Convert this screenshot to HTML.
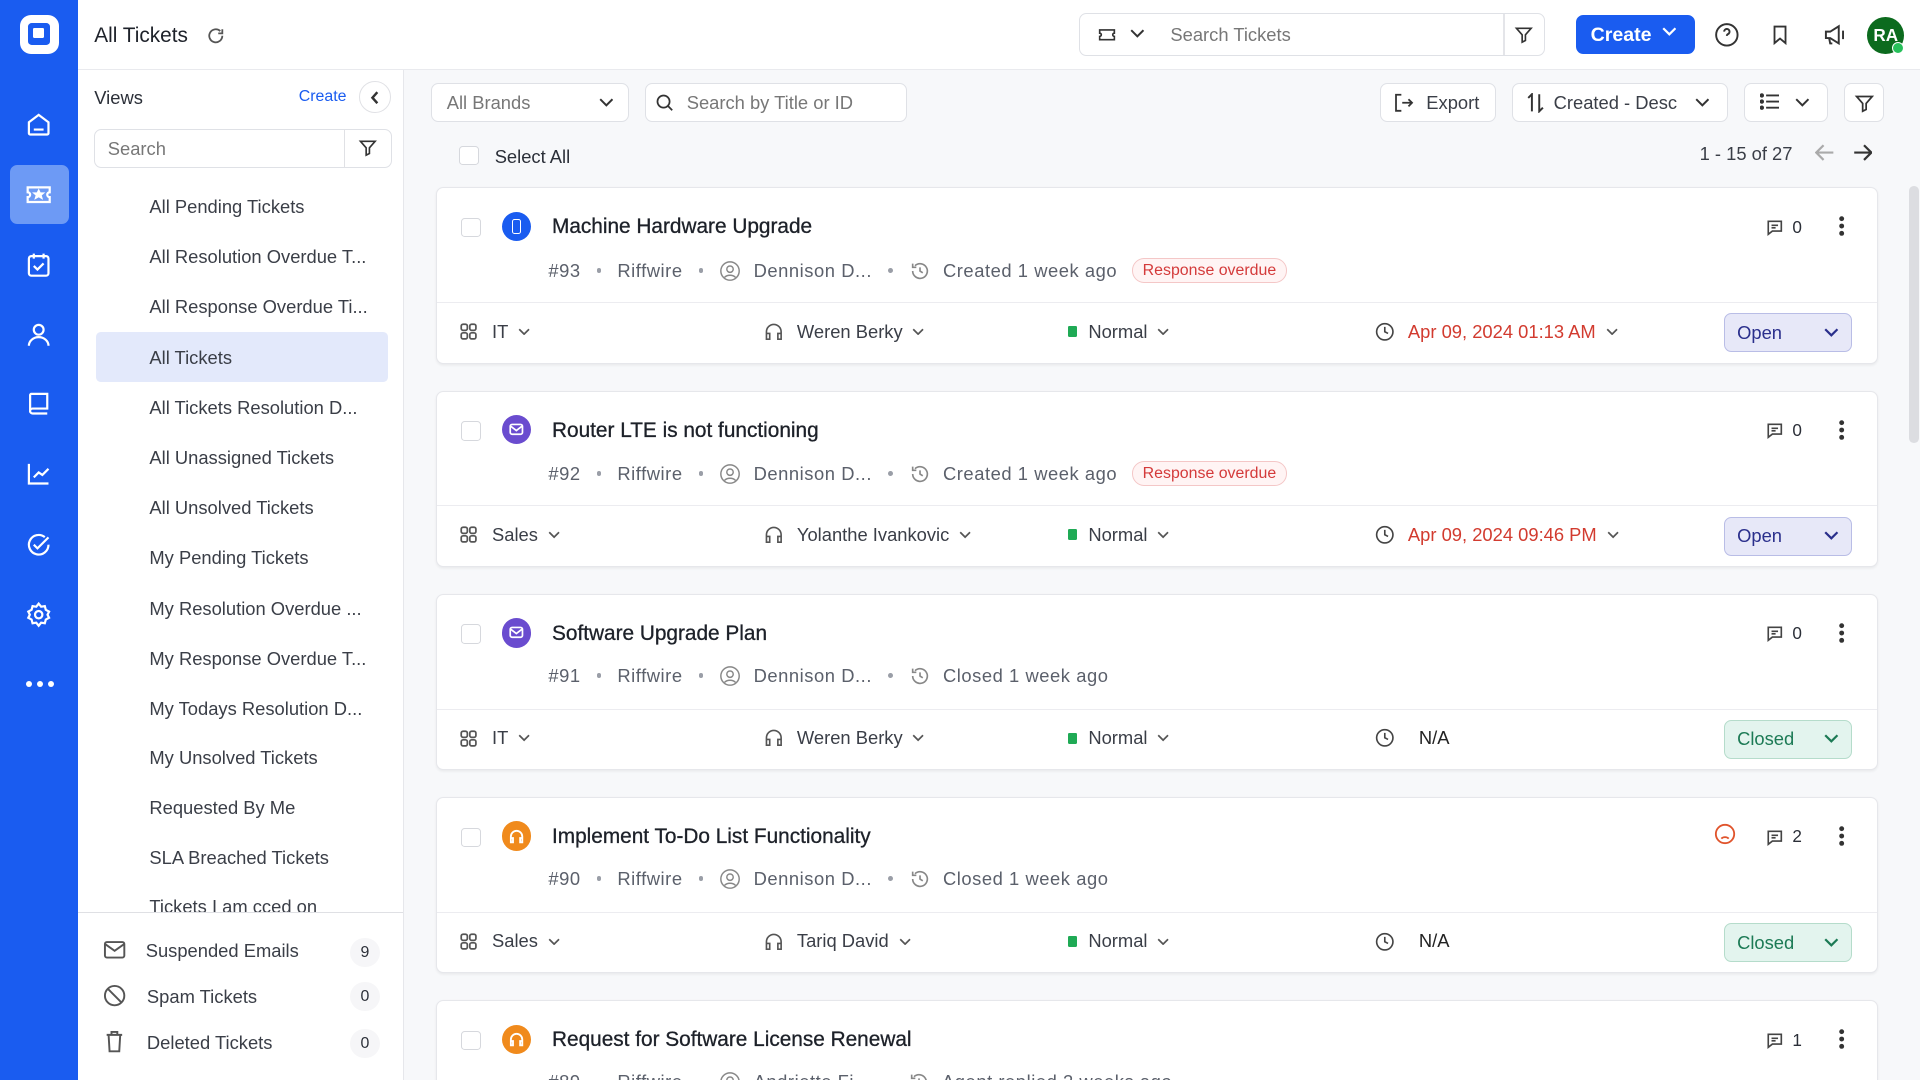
<!DOCTYPE html>
<html><head><meta charset="utf-8">
<style>
*{box-sizing:border-box;margin:0;padding:0}
html,body{width:1920px;height:1080px;overflow:hidden;background:#f7f8fa}
#root{zoom:1.22449;width:1568px;height:882px;position:relative;font-family:"Liberation Sans",sans-serif;color:#2b2f38;overflow:hidden;background:#f7f8fa}
.a{position:absolute}
.sb{left:0;top:0;width:64px;height:882px;background:#1a5cf0}
.ni{position:absolute;left:20px;width:24px;height:24px}
svg{display:block}
.top{left:64px;top:0;width:1504px;height:57px;background:#fff;border-bottom:1px solid #e9eaee}
.views{left:64px;top:57px;width:266px;height:825px;background:#fff;border-right:1px solid #e6e7eb}
.vi{position:absolute;left:58px;font-size:15px;color:#3a3e47;white-space:nowrap}
.btn{position:absolute;background:#fff;border:1px solid #dfe1e6;border-radius:6px;font-size:15px;color:#3a3e47;display:flex;align-items:center}
.card{position:absolute;left:356px;width:1178px;height:144px;background:#fff;border:1px solid #e6e7eb;border-radius:6px;box-shadow:0 1px 2px rgba(0,0,0,.06)}
.card .cb{position:absolute;left:20px;top:24px;width:16px;height:16px;border:1px solid #d6d8dd;border-radius:3px}
.card .ic{position:absolute;left:53px;top:19px;width:24px;height:24px;border-radius:50%}
.card .t{position:absolute;left:94px;top:22px;font-size:17px;font-weight:500;color:#1d2129;-webkit-text-stroke:.25px #1d2129}
.card .m{position:absolute;left:91px;top:57px;font-size:15px;color:#5b606b;white-space:nowrap;display:flex;align-items:center;letter-spacing:.45px}
.card .m svg{margin-right:10px!important}
.card .dv{position:absolute;left:0;right:0;top:93px;border-top:1px solid #ececf0}
.card .b{position:absolute;top:108px;font-size:15px;color:#3a3e47;display:flex;align-items:center;white-space:nowrap}
.dot{display:inline-block;width:4px;height:4px;border-radius:50%;background:#9a9ea7;margin:0 13px}
.ro{border:1px solid #f4c7c7;background:#fff4f4;color:#d43b3b;font-size:13px;border-radius:10px;padding:2px 8px;margin-left:12px;letter-spacing:0}
.st{position:absolute;left:1051px;top:102px;width:105px;height:32px;border-radius:6px;font-size:15px;display:flex;align-items:center;padding:0 10px;justify-content:space-between}
.open{background:#e7e8f8;border:1px solid #b9bde6;color:#2a2f8c}
.closed{background:#e3f4ee;border:1px solid #b5dccb;color:#1c7a55}
.chev{width:10px;height:6px}
</style></head><body><div id="root">

<div class="a sb">
 <div class="a" style="left:16px;top:12px;width:32px;height:32px;background:#fff;border-radius:9px"><div class="a" style="left:7px;top:7px;width:18px;height:18px;background:#1a5cf0;border-radius:3px"></div><div class="a" style="left:11px;top:11px;width:9px;height:8px;background:#fff;border-radius:1px"></div></div>
 <div class="a" style="left:8px;top:135px;width:48px;height:48px;background:#6d9af5;border-radius:6px"></div>
 <svg class="ni" style="top:90px" viewBox="0 0 24 24" fill="none" stroke="#fff" stroke-width="1.8"><path d="M4 10l8-6 8 6v9a1 1 0 0 1-1 1H5a1 1 0 0 1-1-1z M8 16h8"/></svg>
 <svg class="ni" style="top:147px" viewBox="0 0 24 24" fill="none" stroke="#fff" stroke-width="1.8"><path d="M3 6h18v4a2 2 0 0 0 0 4v4H3v-4a2 2 0 0 0 0-4z"/><path d="M12 9l1 2h2l-1.5 1.3.6 2-2.1-1.2-2.1 1.2.6-2L9 11h2z" fill="#fff"/></svg>
 <svg class="ni" style="top:204px" viewBox="0 0 24 24" fill="none" stroke="#fff" stroke-width="1.8"><rect x="4" y="5" width="16" height="16" rx="2"/><path d="M8 3v4M16 3v4M8 13l3 3 5-5"/></svg>
 <svg class="ni" style="top:261px" viewBox="0 0 24 24" fill="none" stroke="#fff" stroke-width="1.8"><circle cx="12" cy="8" r="4"/><path d="M4 21a8 7 0 0 1 16 0"/></svg>
 <svg class="ni" style="top:318px" viewBox="0 0 24 24" fill="none" stroke="#fff" stroke-width="1.8"><path d="M5 19V5a1 1 0 0 1 1-1h13v12H7a2 2 0 0 0 0 4h12"/></svg>
 <svg class="ni" style="top:375px" viewBox="0 0 24 24" fill="none" stroke="#fff" stroke-width="1.8"><path d="M4 4v16h16M8 15l4-4 3 2 5-5"/></svg>
 <svg class="ni" style="top:433px" viewBox="0 0 24 24" fill="none" stroke="#fff" stroke-width="1.8"><path d="M20 12a8 8 0 1 1-3-6.2M8 12l3 3 9-9"/></svg>
 <svg class="ni" style="top:490px" viewBox="0 0 24 24" fill="none" stroke="#fff" stroke-width="1.8"><circle cx="12" cy="12" r="3"/><path d="M12 3l2 2.5 3-.5.8 3 2.7 1.5-1.3 2.5 1.3 2.5-2.7 1.5-.8 3-3-.5L12 21l-2-2.5-3 .5-.8-3L3.5 14.5 4.8 12 3.5 9.5 6.2 8 7 5l3 .5z"/></svg>
 <div class="a" style="left:21px;top:556px;width:24px;height:6px;display:flex;gap:4px"><i style="width:5px;height:5px;border-radius:50%;background:#fff"></i><i style="width:5px;height:5px;border-radius:50%;background:#fff"></i><i style="width:5px;height:5px;border-radius:50%;background:#fff"></i></div>
</div>

<div class="a top">
 <div class="a" style="left:13px;top:20px;font-size:17px;color:#1d2129">All Tickets</div>
 <svg class="a" style="left:104px;top:21px" width="16" height="16" viewBox="0 0 24 24" fill="none" stroke="#555" stroke-width="2.2"><path d="M20 12a8 8 0 1 1-2.5-5.8M20 4v5h-5"/></svg>
 <div class="a" style="left:817px;top:11px;width:381px;height:35px;border:1px solid #dfe1e6;border-radius:6px;background:#fff">
  <svg class="a" style="left:13px;top:9px" width="18" height="16" viewBox="0 0 24 24" fill="none" stroke="#333" stroke-width="2"><path d="M3 6h18v4a2 2 0 0 0 0 4v4H3v-4a2 2 0 0 0 0-4z"/></svg>
  <svg class="a" style="left:41px;top:12px" width="12" height="8" viewBox="0 0 12 8" fill="none" stroke="#333" stroke-width="1.6"><path d="M1 1l5 5 5-5"/></svg>
  <div class="a" style="left:74px;top:8px;font-size:15px;color:#777">Search Tickets</div>
  <div class="a" style="left:346px;top:0;width:1px;height:33px;background:#e4e5e9"></div>
  <svg class="a" style="left:355px;top:9px" width="16" height="16" viewBox="0 0 24 24" fill="none" stroke="#333" stroke-width="2"><path d="M3 4h18l-7 8v7l-4 2v-9z"/></svg>
 </div>
 <div class="a" style="left:1223px;top:12px;width:97px;height:32px;background:#1a5cf0;border-radius:6px;color:#fff;font-size:16px;font-weight:bold;padding:8px 0 0 12px">Create</div>
 <svg class="a" style="left:1293px;top:22px" width="12" height="8" viewBox="0 0 12 8" fill="none" stroke="#fff" stroke-width="1.8"><path d="M1 1l5 5 5-5"/></svg>
 <svg class="a" style="left:1336px;top:18px" width="21" height="21" viewBox="0 0 24 24" fill="none" stroke="#333" stroke-width="1.8"><circle cx="12" cy="12" r="10"/><path d="M9.5 9a2.5 2.5 0 1 1 3.5 2.3c-.7.4-1 1-1 1.7M12 17h.01"/></svg>
 <svg class="a" style="left:1381px;top:18px" width="18" height="21" viewBox="0 0 24 24" fill="none" stroke="#333" stroke-width="2"><path d="M6 3h12v18l-6-5-6 5z"/></svg>
 <svg class="a" style="left:1423px;top:18px" width="22" height="21" viewBox="0 0 24 24" fill="none" stroke="#333" stroke-width="1.8"><path d="M4 9h4l8-5v16l-8-5H4z M7 15l1 5h2 M20 8v8"/></svg>
 <div class="a" style="left:1461px;top:14px;width:30px;height:30px;border-radius:50%;background:#0c6b1e;color:#fff;font-size:14px;font-weight:bold;text-align:center;line-height:30px">RA</div>
 <div class="a" style="left:1481px;top:34px;width:10px;height:10px;border-radius:50%;background:#27c05a;border:1px solid #fff"></div>
</div>

<div class="a views">
 <div class="a" style="left:13px;top:14px;font-size:15px;color:#2b2f38">Views</div>
 <div class="a" style="left:180px;top:15px;font-size:13px;color:#1a5cf0;font-weight:500">Create</div>
 <div class="a" style="left:229px;top:9px;width:26px;height:26px;border:1px solid #e0e1e5;border-radius:50%;background:#fff"></div>
 <svg class="a" style="left:238px;top:17px" width="8" height="11" viewBox="0 0 8 11" fill="none" stroke="#333" stroke-width="2"><path d="M6 1L2 5.5 6 10"/></svg>
 <div class="a" style="left:13px;top:48px;width:243px;height:32px;border:1px solid #dfe1e6;border-radius:6px;background:#fff"></div>
 <div class="a" style="left:24px;top:56px;font-size:15px;color:#777">Search</div>
 <div class="a" style="left:217px;top:48px;width:1px;height:32px;background:#e0e1e5"></div>
 <svg class="a" style="left:228px;top:56px" width="16" height="16" viewBox="0 0 24 24" fill="none" stroke="#333" stroke-width="2"><path d="M3 4h18l-7 8v7l-4 2v-9z"/></svg>
 <div class="a" style="left:14px;top:214px;width:239px;height:41px;background:#e3e9fb;border-radius:4px"></div>
 <div class="vi" style="top:103px">All Pending Tickets</div>
 <div class="vi" style="top:144px">All Resolution Overdue T...</div>
 <div class="vi" style="top:185px">All Response Overdue Ti...</div>
 <div class="vi" style="top:226px">All Tickets</div>
 <div class="vi" style="top:267px">All Tickets Resolution D...</div>
 <div class="vi" style="top:308px">All Unassigned Tickets</div>
 <div class="vi" style="top:349px">All Unsolved Tickets</div>
 <div class="vi" style="top:390px">My Pending Tickets</div>
 <div class="vi" style="top:431px">My Resolution Overdue ...</div>
 <div class="vi" style="top:472px">My Response Overdue T...</div>
 <div class="vi" style="top:513px">My Todays Resolution D...</div>
 <div class="vi" style="top:553px">My Unsolved Tickets</div>
 <div class="vi" style="top:594px">Requested By Me</div>
 <div class="vi" style="top:635px">SLA Breached Tickets</div>
 <div class="vi" style="top:675px">Tickets I am cced on</div>
 <div class="a" style="left:0;top:688px;width:265px;height:137px;background:#fff;border-top:1px solid #dfe0e4"></div>
 <svg class="a" style="left:20px;top:711px" width="19" height="16" viewBox="0 0 24 20" fill="none" stroke="#555" stroke-width="2"><rect x="2" y="2" width="20" height="16" rx="2"/><path d="M2 4l10 7 10-7"/></svg>
 <div class="vi" style="left:55px;top:711px">Suspended Emails</div>
 <div class="a" style="left:222px;top:709px;width:24px;height:24px;border-radius:50%;background:#f6f6f8;font-size:13px;text-align:center;line-height:24px">9</div>
 <svg class="a" style="left:20px;top:747px" width="19" height="19" viewBox="0 0 24 24" fill="none" stroke="#555" stroke-width="2"><circle cx="12" cy="12" r="10"/><path d="M5 5l14 14"/></svg>
 <div class="vi" style="left:56px;top:748px">Spam Tickets</div>
 <div class="a" style="left:222px;top:745px;width:24px;height:24px;border-radius:50%;background:#f6f6f8;font-size:13px;text-align:center;line-height:24px">0</div>
 <svg class="a" style="left:21px;top:784px" width="17" height="19" viewBox="0 0 20 24" fill="none" stroke="#555" stroke-width="2"><path d="M2 5h16M7 5V2h6v3M4 5l1 17h10l1-17"/></svg>
 <div class="vi" style="left:56px;top:786px">Deleted Tickets</div>
 <div class="a" style="left:222px;top:783px;width:24px;height:24px;border-radius:50%;background:#f6f6f8;font-size:13px;text-align:center;line-height:24px">0</div>
</div>

<div class="btn" style="left:352px;top:68px;width:162px;height:32px;padding-left:12px;color:#777">All Brands</div>
<svg class="a" style="left:489px;top:80px" width="12" height="8" viewBox="0 0 12 8" fill="none" stroke="#333" stroke-width="1.6"><path d="M1 1l5 5 5-5"/></svg>
<div class="btn" style="left:527px;top:68px;width:214px;height:32px;padding-left:33px;color:#777">Search by Title or ID</div>
<svg class="a" style="left:534px;top:75px" width="17" height="17" viewBox="0 0 24 24" fill="none" stroke="#333" stroke-width="2"><circle cx="11" cy="11" r="7"/><path d="M16 16l5 5"/></svg>
<div class="btn" style="left:1127px;top:68px;width:95px;height:32px;padding-left:37px">Export</div>
<svg class="a" style="left:1138px;top:76px" width="18" height="16" viewBox="0 0 24 22" fill="none" stroke="#333" stroke-width="2"><path d="M9 2H3v18h6M10 11h11M17 7l4 4-4 4"/></svg>
<div class="btn" style="left:1235px;top:68px;width:176px;height:32px;padding-left:33px">Created - Desc</div>
<svg class="a" style="left:1247px;top:76px" width="14" height="16" viewBox="0 0 14 16" fill="none" stroke="#333" stroke-width="1.6"><path d="M4 15V1L1 4M10 1v14l3-3"/></svg>
<svg class="a" style="left:1384px;top:80px" width="12" height="8" viewBox="0 0 12 8" fill="none" stroke="#333" stroke-width="1.6"><path d="M1 1l5 5 5-5"/></svg>
<div class="btn" style="left:1424px;top:68px;width:69px;height:32px"></div>
<svg class="a" style="left:1437px;top:76px" width="16" height="14" viewBox="0 0 16 14" fill="#333" stroke="#333" stroke-width="1.6"><circle cx="1.5" cy="2" r="1"/><circle cx="1.5" cy="7" r="1"/><circle cx="1.5" cy="12" r="1"/><path d="M5 2h11M5 7h11M5 12h11"/></svg>
<svg class="a" style="left:1466px;top:80px" width="12" height="8" viewBox="0 0 12 8" fill="none" stroke="#333" stroke-width="1.6"><path d="M1 1l5 5 5-5"/></svg>
<div class="btn" style="left:1506px;top:68px;width:33px;height:32px"></div>
<svg class="a" style="left:1514px;top:76px" width="17" height="17" viewBox="0 0 24 24" fill="none" stroke="#333" stroke-width="2"><path d="M3 4h18l-7 8v7l-4 2v-9z"/></svg>

<div class="a" style="left:375px;top:119px;width:16px;height:16px;border:1px solid #d6d8dd;border-radius:3px;background:#fff"></div>
<div class="a" style="left:404px;top:119px;font-size:15px;color:#2b2f38">Select All</div>
<div class="a" style="left:1388px;top:117px;font-size:15px;color:#3a3e47">1 - 15 of 27</div>
<svg class="a" style="left:1482px;top:118px" width="16" height="14" viewBox="0 0 16 14" fill="none" stroke="#aaa" stroke-width="1.8"><path d="M15 7H2M7 1L1 7l6 6"/></svg>
<svg class="a" style="left:1513px;top:118px" width="16" height="14" viewBox="0 0 16 14" fill="none" stroke="#333" stroke-width="1.8"><path d="M1 7h13M9 1l6 6-6 6"/></svg>
<div class="a" style="left:1559px;top:152px;width:8px;height:210px;border-radius:4px;background:#dcdde1"></div>

<div class="card" style="top:153px">
 <div class="cb"></div>
 <div class="ic" style="background:#1a5cf0"><div class="a" style="left:8px;top:6px;width:8px;height:12px;border:1.6px solid #fff;border-radius:2px"></div></div>
 <div class="t">Machine Hardware Upgrade</div>
 <div class="m">#93<span class="dot"></span>Riffwire<span class="dot"></span><svg width="18" height="18" viewBox="0 0 24 24" fill="none" stroke="#888" stroke-width="1.6"><circle cx="12" cy="12" r="10"/><circle cx="12" cy="10" r="3.5"/><path d="M6 19a7 5 0 0 1 12 0"/></svg>Dennison D...<span class="dot"></span><svg width="18" height="18" viewBox="0 0 24 24" fill="none" stroke="#888" stroke-width="1.8"><path d="M4 12a8 8 0 1 0 2.5-5.8M4 4v4h4M12 8v4l3 2"/></svg>Created 1 week ago<span class="ro">Response overdue</span></div>
 <svg class="a" style="left:1085px;top:24px" width="16" height="16" viewBox="0 0 24 24" fill="none" stroke="#444" stroke-width="2"><path d="M4 4h16v12H9l-5 4z M8 9h8M8 12h5"/></svg>
 <div class="a" style="left:1107px;top:23px;font-size:14px">0</div>
 <svg class="a" style="left:1144px;top:22px" width="6" height="18" viewBox="0 0 6 18" fill="#333"><circle cx="3" cy="3" r="2"/><circle cx="3" cy="9" r="2"/><circle cx="3" cy="15" r="2"/></svg>
 <div class="dv"></div>
 <div class="b" style="left:19px"><svg width="14" height="14" viewBox="0 0 14 14" fill="none" stroke="#555" stroke-width="1.4"><rect x="1" y="1" width="5" height="5" rx="1.5"/><rect x="8" y="1" width="5" height="5" rx="1.5"/><rect x="1" y="8" width="5" height="5" rx="1.5"/><rect x="8" y="8" width="5" height="5" rx="1.5"/></svg><span style="margin:0 8px 0 12px">IT</span><svg class="chev" viewBox="0 0 10 6" fill="none" stroke="#555" stroke-width="1.4"><path d="M1 1l4 4 4-4"/></svg></div>
 <div class="b" style="left:267px"><svg width="16" height="16" viewBox="0 0 24 24" fill="none" stroke="#555" stroke-width="2"><path d="M3 18v-6a9 9 0 0 1 18 0v6M3 14h4v7H3zM17 14h4v7h-4z"/></svg><span style="margin:0 8px 0 11px">Weren Berky</span><svg class="chev" viewBox="0 0 10 6" fill="none" stroke="#555" stroke-width="1.4"><path d="M1 1l4 4 4-4"/></svg></div>
 <div class="b" style="left:515px"><i style="width:8px;height:9px;background:#1faa55;border-radius:1px"></i><span style="margin:0 8px 0 9px">Normal</span><svg class="chev" viewBox="0 0 10 6" fill="none" stroke="#555" stroke-width="1.4"><path d="M1 1l4 4 4-4"/></svg></div>
 <div class="b" style="left:766px"><svg width="16" height="16" viewBox="0 0 24 24" fill="none" stroke="#444" stroke-width="2"><circle cx="12" cy="12" r="10"/><path d="M12 6v6l4 2"/></svg><span style="margin:0 8px 0 11px;color:#d23b2f">Apr 09, 2024 01:13 AM</span><svg class="chev" viewBox="0 0 10 6" fill="none" stroke="#555" stroke-width="1.4"><path d="M1 1l4 4 4-4"/></svg></div>
 <div class="st open">Open<svg width="12" height="8" viewBox="0 0 12 8" fill="none" stroke="#2a2f8c" stroke-width="1.8"><path d="M1 1l5 5 5-5"/></svg></div>
</div>

<div class="card" style="top:319px">
 <div class="cb"></div>
 <div class="ic" style="background:#6a4ccf"><svg class="a" style="left:6px;top:6px" width="12" height="12" viewBox="0 0 12 12" fill="none" stroke="#fff" stroke-width="1.4"><rect x="1" y="2" width="10" height="8" rx="1.5"/><path d="M1.5 3.5L6 7l4.5-3.5"/></svg></div>
 <div class="t">Router LTE is not functioning</div>
 <div class="m">#92<span class="dot"></span>Riffwire<span class="dot"></span><svg width="18" height="18" viewBox="0 0 24 24" fill="none" stroke="#888" stroke-width="1.6"><circle cx="12" cy="12" r="10"/><circle cx="12" cy="10" r="3.5"/><path d="M6 19a7 5 0 0 1 12 0"/></svg>Dennison D...<span class="dot"></span><svg width="18" height="18" viewBox="0 0 24 24" fill="none" stroke="#888" stroke-width="1.8"><path d="M4 12a8 8 0 1 0 2.5-5.8M4 4v4h4M12 8v4l3 2"/></svg>Created 1 week ago<span class="ro">Response overdue</span></div>
 <svg class="a" style="left:1085px;top:24px" width="16" height="16" viewBox="0 0 24 24" fill="none" stroke="#444" stroke-width="2"><path d="M4 4h16v12H9l-5 4z M8 9h8M8 12h5"/></svg>
 <div class="a" style="left:1107px;top:23px;font-size:14px">0</div>
 <svg class="a" style="left:1144px;top:22px" width="6" height="18" viewBox="0 0 6 18" fill="#333"><circle cx="3" cy="3" r="2"/><circle cx="3" cy="9" r="2"/><circle cx="3" cy="15" r="2"/></svg>
 <div class="dv"></div>
 <div class="b" style="left:19px"><svg width="14" height="14" viewBox="0 0 14 14" fill="none" stroke="#555" stroke-width="1.4"><rect x="1" y="1" width="5" height="5" rx="1.5"/><rect x="8" y="1" width="5" height="5" rx="1.5"/><rect x="1" y="8" width="5" height="5" rx="1.5"/><rect x="8" y="8" width="5" height="5" rx="1.5"/></svg><span style="margin:0 8px 0 12px">Sales</span><svg class="chev" viewBox="0 0 10 6" fill="none" stroke="#555" stroke-width="1.4"><path d="M1 1l4 4 4-4"/></svg></div>
 <div class="b" style="left:267px"><svg width="16" height="16" viewBox="0 0 24 24" fill="none" stroke="#555" stroke-width="2"><path d="M3 18v-6a9 9 0 0 1 18 0v6M3 14h4v7H3zM17 14h4v7h-4z"/></svg><span style="margin:0 8px 0 11px">Yolanthe Ivankovic</span><svg class="chev" viewBox="0 0 10 6" fill="none" stroke="#555" stroke-width="1.4"><path d="M1 1l4 4 4-4"/></svg></div>
 <div class="b" style="left:515px"><i style="width:8px;height:9px;background:#1faa55;border-radius:1px"></i><span style="margin:0 8px 0 9px">Normal</span><svg class="chev" viewBox="0 0 10 6" fill="none" stroke="#555" stroke-width="1.4"><path d="M1 1l4 4 4-4"/></svg></div>
 <div class="b" style="left:766px"><svg width="16" height="16" viewBox="0 0 24 24" fill="none" stroke="#444" stroke-width="2"><circle cx="12" cy="12" r="10"/><path d="M12 6v6l4 2"/></svg><span style="margin:0 8px 0 11px;color:#d23b2f">Apr 09, 2024 09:46 PM</span><svg class="chev" viewBox="0 0 10 6" fill="none" stroke="#555" stroke-width="1.4"><path d="M1 1l4 4 4-4"/></svg></div>
 <div class="st open">Open<svg width="12" height="8" viewBox="0 0 12 8" fill="none" stroke="#2a2f8c" stroke-width="1.8"><path d="M1 1l5 5 5-5"/></svg></div>
</div>

<div class="card" style="top:485px">
 <div class="cb"></div>
 <div class="ic" style="background:#6a4ccf"><svg class="a" style="left:6px;top:6px" width="12" height="12" viewBox="0 0 12 12" fill="none" stroke="#fff" stroke-width="1.4"><rect x="1" y="2" width="10" height="8" rx="1.5"/><path d="M1.5 3.5L6 7l4.5-3.5"/></svg></div>
 <div class="t">Software Upgrade Plan</div>
 <div class="m">#91<span class="dot"></span>Riffwire<span class="dot"></span><svg width="18" height="18" viewBox="0 0 24 24" fill="none" stroke="#888" stroke-width="1.6"><circle cx="12" cy="12" r="10"/><circle cx="12" cy="10" r="3.5"/><path d="M6 19a7 5 0 0 1 12 0"/></svg>Dennison D...<span class="dot"></span><svg width="18" height="18" viewBox="0 0 24 24" fill="none" stroke="#888" stroke-width="1.8"><path d="M4 12a8 8 0 1 0 2.5-5.8M4 4v4h4M12 8v4l3 2"/></svg>Closed 1 week ago</div>
 <svg class="a" style="left:1085px;top:24px" width="16" height="16" viewBox="0 0 24 24" fill="none" stroke="#444" stroke-width="2"><path d="M4 4h16v12H9l-5 4z M8 9h8M8 12h5"/></svg>
 <div class="a" style="left:1107px;top:23px;font-size:14px">0</div>
 <svg class="a" style="left:1144px;top:22px" width="6" height="18" viewBox="0 0 6 18" fill="#333"><circle cx="3" cy="3" r="2"/><circle cx="3" cy="9" r="2"/><circle cx="3" cy="15" r="2"/></svg>
 <div class="dv"></div>
 <div class="b" style="left:19px"><svg width="14" height="14" viewBox="0 0 14 14" fill="none" stroke="#555" stroke-width="1.4"><rect x="1" y="1" width="5" height="5" rx="1.5"/><rect x="8" y="1" width="5" height="5" rx="1.5"/><rect x="1" y="8" width="5" height="5" rx="1.5"/><rect x="8" y="8" width="5" height="5" rx="1.5"/></svg><span style="margin:0 8px 0 12px">IT</span><svg class="chev" viewBox="0 0 10 6" fill="none" stroke="#555" stroke-width="1.4"><path d="M1 1l4 4 4-4"/></svg></div>
 <div class="b" style="left:267px"><svg width="16" height="16" viewBox="0 0 24 24" fill="none" stroke="#555" stroke-width="2"><path d="M3 18v-6a9 9 0 0 1 18 0v6M3 14h4v7H3zM17 14h4v7h-4z"/></svg><span style="margin:0 8px 0 11px">Weren Berky</span><svg class="chev" viewBox="0 0 10 6" fill="none" stroke="#555" stroke-width="1.4"><path d="M1 1l4 4 4-4"/></svg></div>
 <div class="b" style="left:515px"><i style="width:8px;height:9px;background:#1faa55;border-radius:1px"></i><span style="margin:0 8px 0 9px">Normal</span><svg class="chev" viewBox="0 0 10 6" fill="none" stroke="#555" stroke-width="1.4"><path d="M1 1l4 4 4-4"/></svg></div>
 <div class="b" style="left:766px"><svg width="16" height="16" viewBox="0 0 24 24" fill="none" stroke="#444" stroke-width="2"><circle cx="12" cy="12" r="10"/><path d="M12 6v6l4 2"/></svg><span style="margin:0 8px 0 20px;color:#222">N/A</span></div>
 <div class="st closed">Closed<svg width="12" height="8" viewBox="0 0 12 8" fill="none" stroke="#1c7a55" stroke-width="1.8"><path d="M1 1l5 5 5-5"/></svg></div>
</div>

<div class="card" style="top:651px">
 <div class="cb"></div>
 <div class="ic" style="background:#f08a1c"><svg class="a" style="left:5px;top:5px" width="14" height="14" viewBox="0 0 24 24" fill="none" stroke="#fff" stroke-width="2.6"><path d="M4 18v-6a8 8 0 0 1 16 0v6M4 14h3v6H4zM17 14h3v6h-3z"/></svg></div>
 <div class="t">Implement To-Do List Functionality</div>
 <div class="m">#90<span class="dot"></span>Riffwire<span class="dot"></span><svg width="18" height="18" viewBox="0 0 24 24" fill="none" stroke="#888" stroke-width="1.6"><circle cx="12" cy="12" r="10"/><circle cx="12" cy="10" r="3.5"/><path d="M6 19a7 5 0 0 1 12 0"/></svg>Dennison D...<span class="dot"></span><svg width="18" height="18" viewBox="0 0 24 24" fill="none" stroke="#888" stroke-width="1.8"><path d="M4 12a8 8 0 1 0 2.5-5.8M4 4v4h4M12 8v4l3 2"/></svg>Closed 1 week ago</div>
 <svg class="a" style="left:1043px;top:20px" width="18" height="18" viewBox="0 0 24 24" fill="none" stroke="#e0542c" stroke-width="2"><circle cx="12" cy="12" r="10"/><path d="M8 17a5 4 0 0 1 8 0M9 9.5h.01M15 9.5h.01"/></svg>
 <svg class="a" style="left:1085px;top:24px" width="16" height="16" viewBox="0 0 24 24" fill="none" stroke="#444" stroke-width="2"><path d="M4 4h16v12H9l-5 4z M8 9h8M8 12h5"/></svg>
 <div class="a" style="left:1107px;top:23px;font-size:14px">2</div>
 <svg class="a" style="left:1144px;top:22px" width="6" height="18" viewBox="0 0 6 18" fill="#333"><circle cx="3" cy="3" r="2"/><circle cx="3" cy="9" r="2"/><circle cx="3" cy="15" r="2"/></svg>
 <div class="dv"></div>
 <div class="b" style="left:19px"><svg width="14" height="14" viewBox="0 0 14 14" fill="none" stroke="#555" stroke-width="1.4"><rect x="1" y="1" width="5" height="5" rx="1.5"/><rect x="8" y="1" width="5" height="5" rx="1.5"/><rect x="1" y="8" width="5" height="5" rx="1.5"/><rect x="8" y="8" width="5" height="5" rx="1.5"/></svg><span style="margin:0 8px 0 12px">Sales</span><svg class="chev" viewBox="0 0 10 6" fill="none" stroke="#555" stroke-width="1.4"><path d="M1 1l4 4 4-4"/></svg></div>
 <div class="b" style="left:267px"><svg width="16" height="16" viewBox="0 0 24 24" fill="none" stroke="#555" stroke-width="2"><path d="M3 18v-6a9 9 0 0 1 18 0v6M3 14h4v7H3zM17 14h4v7h-4z"/></svg><span style="margin:0 8px 0 11px">Tariq David</span><svg class="chev" viewBox="0 0 10 6" fill="none" stroke="#555" stroke-width="1.4"><path d="M1 1l4 4 4-4"/></svg></div>
 <div class="b" style="left:515px"><i style="width:8px;height:9px;background:#1faa55;border-radius:1px"></i><span style="margin:0 8px 0 9px">Normal</span><svg class="chev" viewBox="0 0 10 6" fill="none" stroke="#555" stroke-width="1.4"><path d="M1 1l4 4 4-4"/></svg></div>
 <div class="b" style="left:766px"><svg width="16" height="16" viewBox="0 0 24 24" fill="none" stroke="#444" stroke-width="2"><circle cx="12" cy="12" r="10"/><path d="M12 6v6l4 2"/></svg><span style="margin:0 8px 0 20px;color:#222">N/A</span></div>
 <div class="st closed">Closed<svg width="12" height="8" viewBox="0 0 12 8" fill="none" stroke="#1c7a55" stroke-width="1.8"><path d="M1 1l5 5 5-5"/></svg></div>
</div>

<div class="card" style="top:817px">
 <div class="cb"></div>
 <div class="ic" style="background:#f08a1c"><svg class="a" style="left:5px;top:5px" width="14" height="14" viewBox="0 0 24 24" fill="none" stroke="#fff" stroke-width="2.6"><path d="M4 18v-6a8 8 0 0 1 16 0v6M4 14h3v6H4zM17 14h3v6h-3z"/></svg></div>
 <div class="t">Request for Software License Renewal</div>
 <div class="m">#89<span class="dot"></span>Riffwire<span class="dot"></span><svg width="18" height="18" viewBox="0 0 24 24" fill="none" stroke="#888" stroke-width="1.6"><circle cx="12" cy="12" r="10"/><circle cx="12" cy="10" r="3.5"/><path d="M6 19a7 5 0 0 1 12 0"/></svg>Andriette Fi...<span class="dot"></span><svg width="18" height="18" viewBox="0 0 24 24" fill="none" stroke="#888" stroke-width="1.8"><path d="M4 12a8 8 0 1 0 2.5-5.8M4 4v4h4M12 8v4l3 2"/></svg>Agent replied 2 weeks ago</div>
 <svg class="a" style="left:1085px;top:24px" width="16" height="16" viewBox="0 0 24 24" fill="none" stroke="#444" stroke-width="2"><path d="M4 4h16v12H9l-5 4z M8 9h8M8 12h5"/></svg>
 <div class="a" style="left:1107px;top:23px;font-size:14px">1</div>
 <svg class="a" style="left:1144px;top:22px" width="6" height="18" viewBox="0 0 6 18" fill="#333"><circle cx="3" cy="3" r="2"/><circle cx="3" cy="9" r="2"/><circle cx="3" cy="15" r="2"/></svg>
</div>

</div></body></html>
